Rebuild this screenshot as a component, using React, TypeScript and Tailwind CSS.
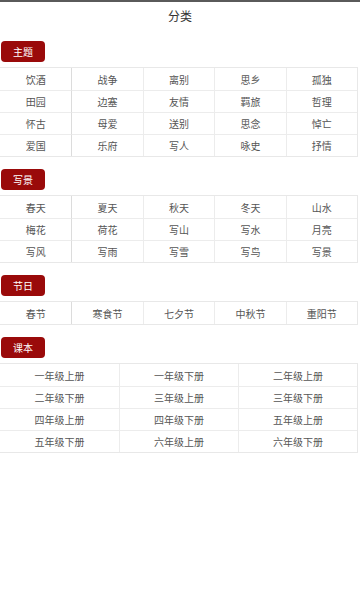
import React from "react";

const sections: { title: string; cols: number; items: string[] }[] = [
  {
    title: "主题",
    cols: 5,
    items: [
      "饮酒", "战争", "离别", "思乡", "孤独",
      "田园", "边塞", "友情", "羁旅", "哲理",
      "怀古", "母爱", "送别", "思念", "悼亡",
      "爱国", "乐府", "写人", "咏史", "抒情",
    ],
  },
  {
    title: "写景",
    cols: 5,
    items: [
      "春天", "夏天", "秋天", "冬天", "山水",
      "梅花", "荷花", "写山", "写水", "月亮",
      "写风", "写雨", "写雪", "写鸟", "写景",
    ],
  },
  {
    title: "节日",
    cols: 5,
    items: ["春节", "寒食节", "七夕节", "中秋节", "重阳节"],
  },
  {
    title: "课本",
    cols: 3,
    items: [
      "一年级上册", "一年级下册", "二年级上册",
      "二年级下册", "三年级上册", "三年级下册",
      "四年级上册", "四年级下册", "五年级上册",
      "五年级下册", "六年级上册", "六年级下册",
    ],
  },
];

export default function App() {
  return (
    <div
      className="w-[360px] h-[600px] bg-white overflow-hidden"
      style={{ fontFamily: '"Noto Sans CJK SC", "Noto Sans", sans-serif' }}
    >
      <div className="h-[2px] bg-[#5a5a5a]" />
      <div className="h-[28px] flex items-center justify-center text-[12px] text-[#333]">
        分类
      </div>
      <div className="flex flex-col gap-[12px] pt-[11px]">
        {sections.map((s) => (
          <div key={s.title}>
            <div className="ml-[1px] w-[44px] h-[21px] rounded-[4px] bg-[#9a0a0a] text-white text-[10px] flex items-center justify-center">
              {s.title}
            </div>
            <div
              className={
                "mt-[5px] w-[358px] grid border-t border-b border-r border-[#e8e8e8] " +
                (s.cols === 5 ? "grid-cols-5" : "grid-cols-3")
              }
            >
              {s.items.map((it, i) => (
                <div
                  key={i}
                  className={
                    "h-[22px] flex items-center justify-center text-[10px] text-[#555] border-[#ececec] " +
                    (i >= s.cols ? "border-t " : "") +
                    (i % s.cols !== 0 ? "border-l " : "") +
                    (s.cols === 5 && i % s.cols === 1 ? "border-l-[#dcdcdc] " : "")
                  }
                >
                  {it}
                </div>
              ))}
            </div>
          </div>
        ))}
      </div>
    </div>
  );
}
